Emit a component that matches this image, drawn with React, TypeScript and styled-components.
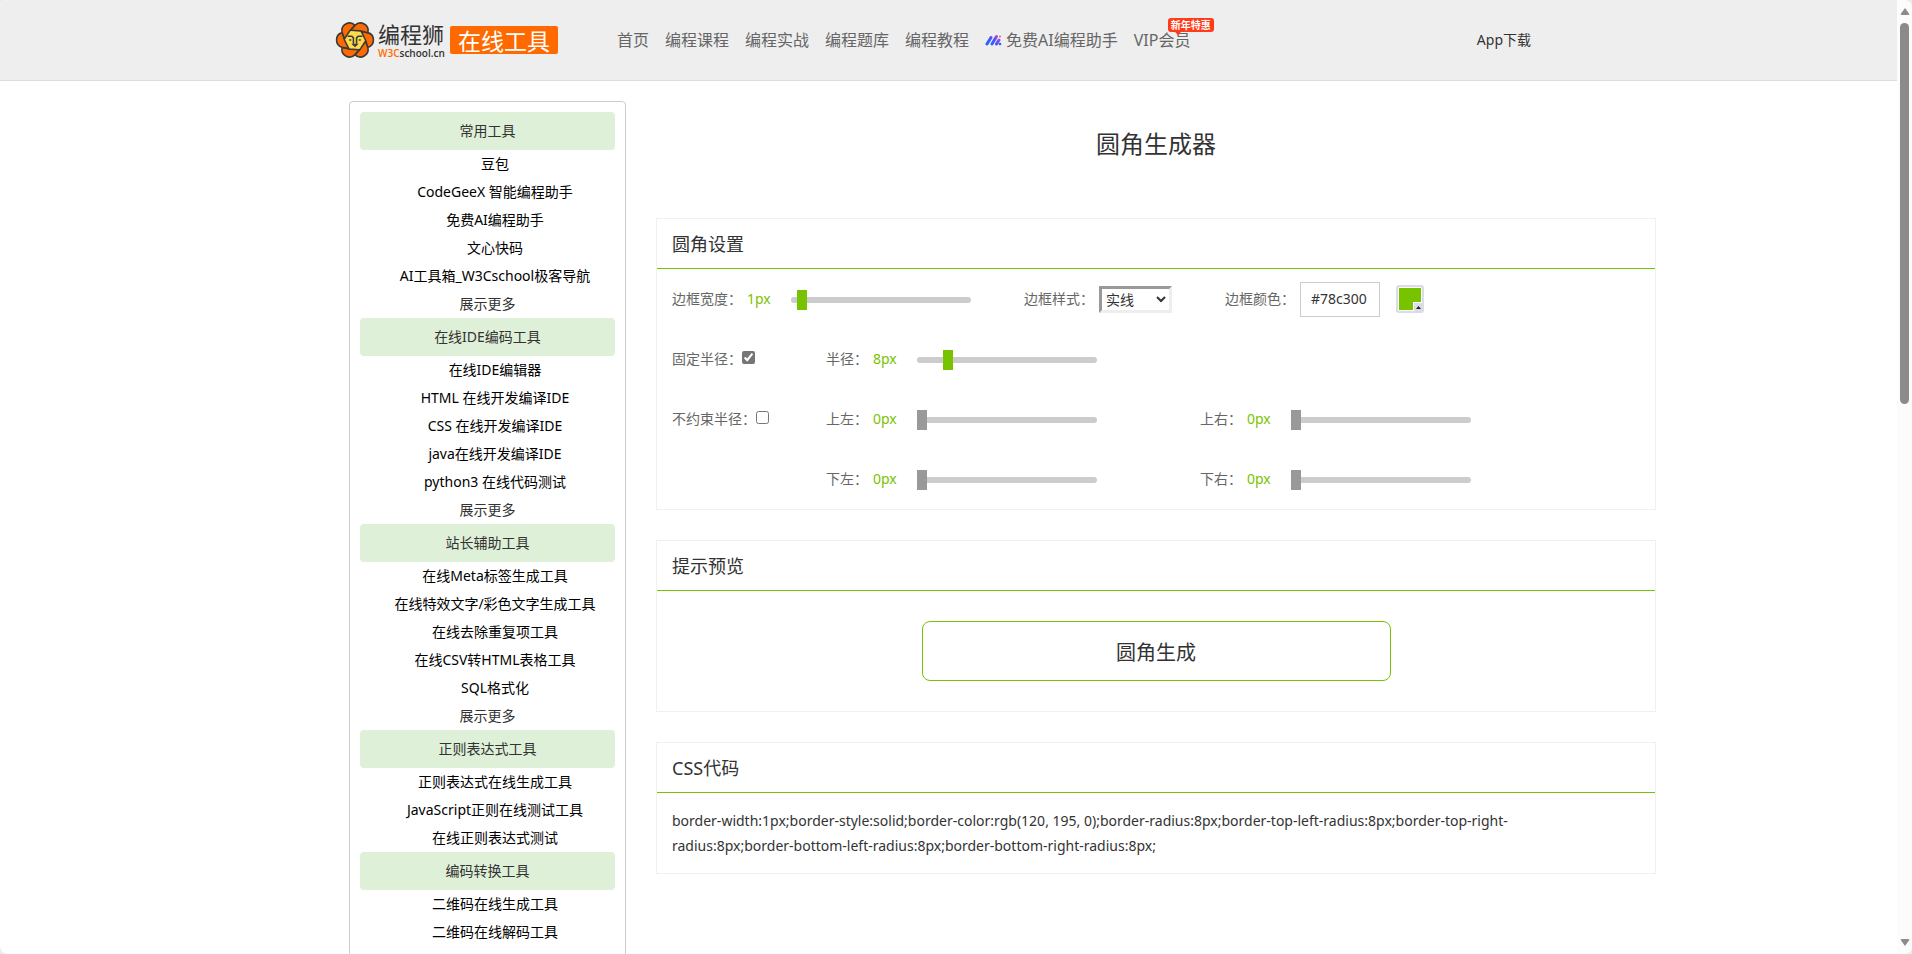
import React, { useState } from "react";
import styled, { createGlobalStyle } from "styled-components";

const GREEN = "#78c300";

const GlobalStyle = createGlobalStyle`
  *, *::before, *::after { box-sizing: border-box; }
  body {
    margin: 0;
    background: #ececec;
    color: #333;
    font-family: "Noto Sans", "Noto Sans CJK SC", sans-serif;
    font-size: 14px;
    line-height: 20px;
  }
  a { color: inherit; text-decoration: none; }
  h1, h2, p, ul { margin: 0; padding: 0; font-weight: 400; }
  ul { list-style: none; }
  input, select, button { font: inherit; color: inherit; margin: 0; }
`;

const Window = styled.div`
  display: flex;
  height: 100vh;
  overflow: hidden;
  border-radius: 8px;
  background: #fff;
`;

const Page = styled.div`
  flex: 1;
  min-width: 0;
  overflow: auto;
  scrollbar-width: none;
`;

const ScrollRail = styled.div`
  display: flex;
  flex-direction: column;
  align-items: center;
  width: 15px;
  padding: 8px 0;
  background: #fcfcfc;
`;

const ScrollArrow = styled.span<{ $down?: boolean }>`
  border: 5px solid transparent;
  border-width: ${(p) => (p.$down ? "7px 5px 0" : "0 5px 7px")};
  border-top-color: ${(p) => (p.$down ? "#8b8b8b" : "transparent")};
  border-bottom-color: ${(p) => (p.$down ? "transparent" : "#8b8b8b")};
  border-radius: 2px;
`;

const ScrollTrack = styled.div`
  flex: 1;
  padding: 8px 0;
`;

const ScrollThumb = styled.div`
  width: 9px;
  height: 42%;
  border-radius: 5px;
  background: #8b8b8b;
`;

const Header = styled.header`
  border-bottom: 1px solid #ddd;
  background: #eee;
`;

const HeaderInner = styled.div`
  display: flex;
  align-items: center;
  max-width: 1227px;
  height: 80px;
  margin: 0 auto;
  padding-right: 31px;
`;

const Logo = styled.a`
  display: flex;
  align-items: center;
  width: 282px;
`;

const LogoWords = styled.span`
  display: flex;
  flex-direction: column;
  width: 67px;
  margin: 0 5px 0 3px;
  white-space: nowrap;
`;

const LogoName = styled.span`
  font: 400 22px/26px "Noto Sans CJK SC", sans-serif;
`;

const LogoDomain = styled.span`
  font: 600 10px/14px "Open Sans", sans-serif;
  b { color: #ff6a00; font-weight: 600; }
`;

const LogoTag = styled.span`
  padding: 0 8px;
  border-radius: 2px;
  background: #ff6a00;
  color: #fff;
  font: 400 23px/28px "Noto Sans CJK SC", sans-serif;
`;

const Nav = styled.nav`
  display: flex;
  flex: 1;
  gap: 16px;
  color: #666;
  font-size: 16px;
  white-space: nowrap;
`;

const NavLink = styled.a`
  position: relative;
  display: flex;
  align-items: center;
  gap: 4px;
`;

const PromoBadge = styled.span`
  position: absolute;
  top: -12px;
  left: 34px;
  padding: 0 3px;
  border-radius: 3px;
  background: #ff3b19;
  color: #fff;
  font-size: 10px;
  font-weight: 700;
  line-height: 14px;
  &::after {
    content: "";
    position: absolute;
    top: 14px;
    left: 7px;
    border: 3px solid transparent;
    border-top-color: #ff3b19;
  }
`;

const Content = styled.div`
  display: flex;
  align-items: flex-start;
  gap: 30px;
  max-width: 1199px;
  margin: 0 auto;
  padding: 20px 0;
`;

const Sidebar = styled.aside`
  flex: 0 0 277px;
  padding: 10px;
  border: 1px solid #ccc;
  border-radius: 4px;
  text-align: center;
  line-height: 28px;
`;

const GroupTitle = styled.h2`
  border-radius: 4px;
  background: #dff0d8;
  font-size: 14px;
  line-height: 38px;
`;

const ToolItem = styled.li`
  padding-left: 15px;
  color: #000;
`;

const MoreLink = styled.a`
  display: block;
`;

const Main = styled.main`
  flex: 0 0 1000px;
`;

const Title = styled.h1`
  padding: 23px 0 54px;
  font-size: 24px;
  line-height: 40px;
  text-align: center;
`;

const Panel = styled.section`
  margin-bottom: 30px;
  border: 1px solid #f0f0f0;
`;

const PanelTitle = styled.h2`
  padding: 2px 15px 0;
  border-bottom: 1px solid ${GREEN};
  font-size: 18px;
  line-height: 47px;
`;

const Row = styled.div`
  display: flex;
  align-items: center;
  height: 60px;
  padding: 0 15px;
  color: #666;
`;

const Cell = styled.div<{ $width: number }>`
  display: flex;
  align-items: center;
  width: ${(p) => p.$width}px;
`;

const Field = styled.label<{ $gap?: number }>`
  display: flex;
  align-items: center;
  gap: ${(p) => p.$gap ?? 5}px;
`;

const Value = styled.output`
  width: 39px;
  color: ${GREEN};
`;

const Slider = styled.input<{ $active: boolean }>`
  appearance: none;
  width: 180px;
  height: 22px;
  background: none;
  &::-webkit-slider-runnable-track {
    height: 6px;
    margin-top: 2px;
    border-radius: 3px;
    background: #ccc;
  }
  &::-webkit-slider-thumb {
    appearance: none;
    width: 10px;
    height: 20px;
    margin-top: -7px;
    background: ${(p) => (p.$active ? GREEN : "#999")};
  }
`;

const StyleSelect = styled.select`
  width: 73px;
  height: 27px;
  border: 3px solid;
  border-color: #999 #eee #eee #999;
  background: #fff;
  color: #333;
`;

const Check = styled.input`
  align-self: flex-start;
  width: 13px;
  height: 13px;
  margin-top: 2px;
  accent-color: #767676;
`;

const ColorText = styled.input`
  width: 80px;
  height: 35px;
  padding: 0 10px 2px;
  border: 1px solid #ccc;
  color: #333;
`;

const Swatch = styled.button`
  position: relative;
  width: 28px;
  height: 28px;
  margin-left: 16px;
  padding: 0;
  border: 2px solid #dadde5;
  border-radius: 3px;
  background: ${GREEN};
  box-shadow: inset 0 0 0 1px #fff;
`;

const SwatchArrow = styled.span`
  position: absolute;
  right: 0;
  bottom: 0;
  display: flex;
  align-items: center;
  justify-content: center;
  width: 9px;
  height: 9px;
  border: solid #fff;
  border-width: 1px 0 0 1px;
  background: #dadde5;
`;

const PreviewBody = styled.div`
  display: flex;
  justify-content: center;
  padding: 30px;
`;

const Preview = styled.div`
  width: 50%;
  padding-top: 4px;
  border: 1px solid ${GREEN};
  border-radius: 8px;
  font-size: 20px;
  line-height: 54px;
  text-align: center;
`;

const Code = styled.p`
  padding: 15px 80px 15px 15px;
  line-height: 25px;
`;

const groups = [
  { title: "常用工具", more: true, items: ["豆包", "CodeGeeX 智能编程助手", "免费AI编程助手", "文心快码", "AI工具箱_W3Cschool极客导航"] },
  { title: "在线IDE编码工具", more: true, items: ["在线IDE编辑器", "HTML 在线开发编译IDE", "CSS 在线开发编译IDE", "java在线开发编译IDE", "python3 在线代码测试"] },
  { title: "站长辅助工具", more: true, items: ["在线Meta标签生成工具", "在线特效文字/彩色文字生成工具", "在线去除重复项工具", "在线CSV转HTML表格工具", "SQL格式化"] },
  { title: "正则表达式工具", more: false, items: ["正则表达式在线生成工具", "JavaScript正则在线测试工具", "在线正则表达式测试"] },
  { title: "编码转换工具", more: false, items: ["二维码在线生成工具", "二维码在线解码工具"] },
];

const petals = [0, 60, 120, 180, 240, 300];

function LionLogo() {
  return (
    <svg width="40" height="38" viewBox="-19 -18 38 36" aria-hidden="true">
      <circle r="11" fill="#ffdc4a" />
      {petals.map((angle) => (
        <path
          key={angle}
          transform={`rotate(${angle})`}
          d="M12 -7A7.200 7.200 0 0 1 12 7L10 0L6 -8Z"
          fill="#ff6a00"
          stroke="#3a3a3a"
          strokeWidth="1.500"
          strokeLinejoin="round"
        />
      ))}
      <path
        d="M-7 -3.500H-3L-1.500 -2V3.500M7 -3.500H3L1.500 -2V3.500M-5.500 0H-3.500M5.500 0H3.500"
        fill="none"
        stroke="#3a3a3a"
        strokeWidth="1.500"
      />
      <path d="M-3.500 3.500H3.500L0 7Z" fill="#3a3a3a" />
    </svg>
  );
}

function AiMark() {
  return (
    <svg width="17" height="12" viewBox="0 0 17 12" aria-hidden="true">
      <defs>
        <linearGradient id="aiMark" gradientUnits="userSpaceOnUse" x1="2" y1="11" x2="15" y2="1">
          <stop offset="0" stopColor="#1768ff" />
          <stop offset="0.6" stopColor="#5a4dff" />
          <stop offset="1" stopColor="#e0569a" />
        </linearGradient>
      </defs>
      <path d="M2 10L6 3.500M7 10L11.500 2.500M11.500 10L14 6" stroke="url(#aiMark)" strokeWidth="3" strokeLinecap="round" />
      <circle cx="15" cy="2.500" r="1" fill="#e0569a" />
      <circle cx="15" cy="10" r="1.300" fill="#1768ff" />
    </svg>
  );
}

interface PxSliderProps {
  label: string;
  initial?: number;
  max: number;
}

function PxSlider({ label, initial = 0, max }: PxSliderProps) {
  const [value, setValue] = useState(initial);
  return (
    <Field>
      {label}
      <Value>{value}px</Value>
      <Slider
        type="range"
        min={0}
        max={max}
        value={value}
        $active={value > 0}
        onChange={(e) => setValue(Number(e.target.value))}
      />
    </Field>
  );
}

export default function App() {
  return (
    <>
      <GlobalStyle />
      <Window>
        <Page>
          <Header>
            <HeaderInner>
              <Logo href="#">
                <LionLogo />
                <LogoWords>
                  <LogoName>编程狮</LogoName>
                  <LogoDomain><b>W3C</b>school.cn</LogoDomain>
                </LogoWords>
                <LogoTag>在线工具</LogoTag>
              </Logo>
              <Nav>
                <NavLink href="#">首页</NavLink>
                <NavLink href="#">编程课程</NavLink>
                <NavLink href="#">编程实战</NavLink>
                <NavLink href="#">编程题库</NavLink>
                <NavLink href="#">编程教程</NavLink>
                <NavLink href="#"><AiMark />免费AI编程助手</NavLink>
                <NavLink href="#">VIP会员<PromoBadge>新年特惠</PromoBadge></NavLink>
              </Nav>
              <a href="#">App下载</a>
            </HeaderInner>
          </Header>
          <Content>
            <Sidebar>
              {groups.map((group) => (
                <section key={group.title}>
                  <GroupTitle>{group.title}</GroupTitle>
                  <ul>
                    {group.items.map((item) => (
                      <ToolItem key={item}><a href="#">{item}</a></ToolItem>
                    ))}
                  </ul>
                  {group.more && <MoreLink href="#">展示更多</MoreLink>}
                </section>
              ))}
            </Sidebar>
            <Main>
              <Title>圆角生成器</Title>
              <Panel>
                <PanelTitle>圆角设置</PanelTitle>
                <Row>
                  <Cell $width={352}><PxSlider label="边框宽度：" initial={1} max={28} /></Cell>
                  <Cell $width={201}>
                    <Field>
                      边框样式：
                      <StyleSelect defaultValue="solid">
                        <option value="solid">实线</option>
                        <option value="dashed">虚线</option>
                        <option value="dotted">点线</option>
                      </StyleSelect>
                    </Field>
                  </Cell>
                  <Field>
                    边框颜色：
                    <ColorText type="text" defaultValue="#78c300" />
                  </Field>
                  <Swatch type="button" aria-label="选择颜色">
                    <SwatchArrow>
                      <svg width="5" height="3" viewBox="0 0 5 3" aria-hidden="true"><path d="M0 3L2.500 0L5 3Z" fill="#222" /></svg>
                    </SwatchArrow>
                  </Swatch>
                </Row>
                <Row>
                  <Cell $width={154}><Field $gap={0}>固定半径：<Check type="checkbox" defaultChecked /></Field></Cell>
                  <PxSlider label="半径：" initial={8} max={52} />
                </Row>
                <Row>
                  <Cell $width={154}><Field $gap={0}>不约束半径：<Check type="checkbox" /></Field></Cell>
                  <Cell $width={374}><PxSlider label="上左：" max={52} /></Cell>
                  <PxSlider label="上右：" max={52} />
                </Row>
                <Row>
                  <Cell $width={154} />
                  <Cell $width={374}><PxSlider label="下左：" max={52} /></Cell>
                  <PxSlider label="下右：" max={52} />
                </Row>
              </Panel>
              <Panel>
                <PanelTitle>提示预览</PanelTitle>
                <PreviewBody><Preview>圆角生成</Preview></PreviewBody>
              </Panel>
              <Panel>
                <PanelTitle>CSS代码</PanelTitle>
                <Code>
                  border-width:1px;border-style:solid;border-color:rgb(120, 195, 0);border-radius:8px;border-top-left-radius:8px;border-top-right-radius:8px;border-bottom-left-radius:8px;border-bottom-right-radius:8px;
                </Code>
              </Panel>
            </Main>
          </Content>
        </Page>
        <ScrollRail aria-hidden="true">
          <ScrollArrow />
          <ScrollTrack><ScrollThumb /></ScrollTrack>
          <ScrollArrow $down />
        </ScrollRail>
      </Window>
    </>
  );
}
